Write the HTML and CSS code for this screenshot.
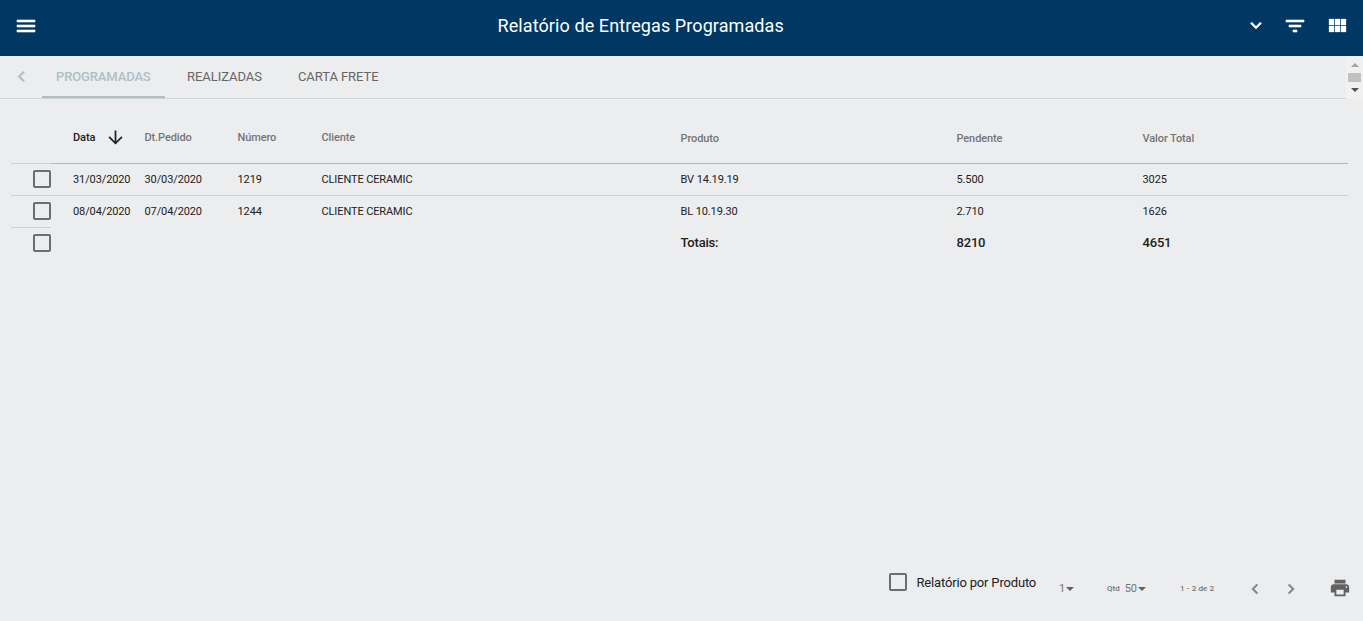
FILE: index.html
```html
<!DOCTYPE html>
<html lang="pt-BR">
<head>
<meta charset="utf-8">
<title>Relatório de Entregas Programadas</title>
<link rel="stylesheet" href="styles.css">
</head>
<body>
<header class="toolbar">
  <svg class="icon bold" viewBox="0 0 24 24"><path d="M3 18h18v-2H3v2zm0-5h18v-2H3v2zm0-7v2h18V6H3z"/></svg>
  <h1 class="title">Relatório de Entregas Programadas</h1>
  <div class="actions">
    <svg class="icon chev bold" viewBox="0 0 24 24"><path d="M7.41 7.84L12 12.42l4.59-4.58L18 9.25l-6 6-6-6z"/></svg>
    <svg class="icon bold" viewBox="0 0 24 24"><path d="M10 18h4v-2h-4v2zM3 6v2h18V6H3zm3 7h12v-2H6v2z"/></svg>
    <svg class="icon grid" viewBox="0 0 24 24"><path d="M4 11h5V5H4v6zm0 7h5v-6H4v6zm6 0h5v-6h-5v6zm6 0h5v-6h-5v6zm-6-7h5V5h-5v6zm6-6v6h5V5h-5z"/></svg>
  </div>
</header>
<nav class="tabs">
  <div class="tablist">
    <div class="prev"><svg class="bold" viewBox="0 0 24 24"><path d="M15.41 7.41L14 6l-6 6 6 6 1.41-1.41L10.83 12z"/></svg></div>
    <div class="tab active">PROGRAMADAS</div>
    <div class="tab second">REALIZADAS</div>
    <div class="tab">CARTA FRETE</div>
  </div>
  <div class="scrollbar"><i class="up"></i><i class="thumb"></i><i class="down"></i></div>
</nav>
<main class="report">
  <div class="row head">
    <span class="check"></span>
    <span class="sorted">Data<svg viewBox="0 0 24 24"><path d="M20 12l-1.41-1.41L13 16.17V4h-2v12.17l-5.58-5.59L4 12l8 8 8-8z"/></svg></span>
    <span>Dt.Pedido</span><span>Número</span><span>Cliente</span>
    <span class="low">Produto</span><span class="low">Pendente</span><span class="low">Valor Total</span>
  </div>
  <div class="row">
    <span class="check"><i class="box"></i></span>
    <span>31/03/2020</span><span>30/03/2020</span><span>1219</span><span>CLIENTE CERAMIC</span><span>BV 14.19.19</span><span>5.500</span><span>3025</span>
  </div>
  <div class="row last">
    <span class="check"><i class="box"></i></span>
    <span>08/04/2020</span><span>07/04/2020</span><span>1244</span><span>CLIENTE CERAMIC</span><span>BL 10.19.30</span><span>2.710</span><span>1626</span>
  </div>
  <div class="row totals">
    <span class="check"><i class="box"></i></span>
    <span></span><span></span><span></span><span></span><span>Totais:</span><span>8210</span><span>4651</span>
  </div>
</main>
<footer class="footer">
  <label class="option"><i class="box"></i><span>Relatório por Produto</span></label>
  <div class="select page">1<i class="caret"></i></div>
  <div class="select qty"><small>Qtd</small>50<i class="caret"></i></div>
  <div class="range">1 - 2 de 2</div>
  <svg class="step back bold" viewBox="0 0 24 24"><path d="M15.41 7.41L14 6l-6 6 6 6 1.41-1.41L10.83 12z"/></svg>
  <svg class="step next bold" viewBox="0 0 24 24"><path d="M10 6L8.59 7.41 13.17 12l-4.58 4.59L10 18l6-6z"/></svg>
  <svg class="print" viewBox="0 0 24 24"><path d="M19 8H5c-1.66 0-3 1.34-3 3v6h4v4h12v-4h4v-6c0-1.66-1.34-3-3-3zm-3 11H8v-5h8v5zm3-7c-.55 0-1-.45-1-1s.45-1 1-1 1 .45 1 1-.45 1-1 1zm-1-9H6v4h12V3z"/></svg>
</footer>
</body>
</html>
```
FILE: styles.css
```css
* { box-sizing: border-box; }
body {
  margin: 0;
  height: 621px;
  display: flex;
  flex-direction: column;
  overflow: hidden;
  background: #ecedef;
  color: #212121;
  font-family: Roboto, "Liberation Sans", sans-serif;
  font-size: 11px;
}
svg { display: block; fill: currentColor; flex: none; }
.bold { stroke: currentColor; stroke-width: 0.6; }
.toolbar {
  height: 56px;
  flex: none;
  display: flex;
  align-items: center;
  justify-content: space-between;
  padding: 0 14px 4px 14px;
  background: #003763;
  color: #fff;
}
.icon { width: 24px; height: 24px; }
.title { margin: 0 0 0 459.5px; font-size: 18px; font-weight: 400; line-height: 24px; letter-spacing: 0.09px; white-space: nowrap; }
.actions { display: flex; margin-left: auto; gap: 18px; }
.actions .chev { width: 22px; height: 22px; margin-top: 1px; margin-right: -2px; }
.actions .grid { margin-left: -0.5px; margin-right: 0.5px; stroke: currentColor; stroke-width: 0.3; }
.tabs { height: 43px; flex: none; display: flex; }
.tablist { flex: 1; display: flex; border-bottom: 1px solid #d2d4d6; color: #666; font-size: 13px; letter-spacing: -0.05px; }
.prev { width: 42px; padding: 10px 0 0 11px; color: #b0bec5; }
.prev svg { width: 21px; height: 21px; }
.tab { padding: 0 14px; line-height: 41px; height: 42px; }
.tab.active { width: 123px; border-bottom: 2px solid #b0bec5; color: #b0bec5; font-weight: 500; letter-spacing: -0.13px; }
.tab.second { margin: 0 8px; }
.scrollbar { width: 17px; background: #f1f1f1; display: flex; flex-direction: column; align-items: center; }
.up, .down { border: 4px solid transparent; width: 0; height: 0; }
.up { border-top: 0; border-bottom-color: #a3a3a3; margin-top: 7px; }
.thumb { width: 13px; height: 9px; margin: 6px 0; background: #c1c1c1; }
.down { border-bottom: 0; border-top-color: #505050; }
.report { flex: 1; padding: 14px 15px 0 11px; }
.row {
  display: grid;
  grid-template-columns: 40px 93.5px 93px 84px 359px 276px 186px 1fr;
  height: 32px;
  line-height: 31px;
  letter-spacing: -0.11px;
}
.row > span { border-bottom: 1px solid #cfd0d2; white-space: nowrap; }
.row > span:nth-child(2) { padding-left: 22px; }
.row > .check { padding: 6px 0 0 22px; }
.row.head { height: 51px; line-height: 49px; color: #757575; font-weight: 500; }
.row.head > span { border-color: #b4b6b8; }
.row.head > .check { border-color: #cfd0d2; }
.row.head .low { padding-top: 1px; }
.row.head .sorted { display: flex; color: #212121; }
.sorted svg { width: 21px; height: 21px; margin: 14px 0 0 9.5px; }
.row.last > span:not(.check), .row.totals > span { border-bottom: 0; }
.row.totals { font-size: 13px; font-weight: 500; line-height: 30px; letter-spacing: -0.2px; }
.box { display: block; width: 18px; height: 18px; flex: none; border: 2px solid #6d6e70; border-radius: 2px; }
.footer { height: 61px; flex: none; display: flex; align-items: flex-start; padding-left: 889px; color: #757575; }
.option { display: flex; width: 170px; padding-top: 13px; gap: 9.5px; color: #212121; font-size: 13px; line-height: 20px; letter-spacing: -0.17px; white-space: nowrap; }
.select { display: flex; align-items: center; padding-top: 22px; line-height: 14px; }
.page { width: 48px; }
.qty { width: 73px; }
.qty small { font-size: 8px; margin-right: 5px; font-weight: 500; }
.caret { border: 4px solid transparent; border-top-color: #616161; border-bottom: 0; margin-left: 1px; }
.range { width: 65px; padding-top: 22px; font-size: 8px; font-weight: 500; line-height: 14px; letter-spacing: 0.1px; }
.step { width: 20px; height: 20px; margin-top: 19px; color: #858585; }
.next { margin-left: 16px; }
.print { width: 22px; height: 22px; margin: 17px 0 0 28px; color: #616161; }
```
